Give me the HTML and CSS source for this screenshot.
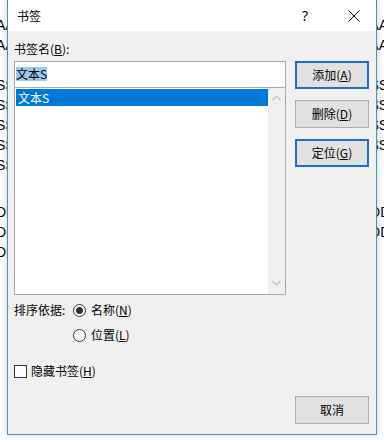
FILE: index.html
```html
<!DOCTYPE html>
<html lang="zh-CN">
<head>
<meta charset="utf-8">
<title>书签</title>
<link rel="stylesheet" href="styles.css">
</head>
<body>
<div class="doc">
  <div class="line">AAAAAAAAAAAAAAAAAAAAAAAAAAAAAAAAAAAAAAAAAAAAAAAA</div>
  <div class="line">AAAAAAAAAAAAAAAAAAAAAAAAAAAAAAAAAAAAAAAAAAAAAAAA</div>
  <div class="line"></div>
  <div class="line">SSSSSSSSSSSSSSSSSSSSSSSSSSSSSSSSSSSSSSSSSSSSSSSSSS</div>
  <div class="line">SSSSSSSSSSSSSSSSSSSSSSSSSSSSSSSSSSSSSSSSSSSSSSSSSS</div>
  <div class="line">SSSSSSSSSSSSSSSSSSSSSSSSSSSSSSSSSSSSSSSSSSSSSSSSSS</div>
  <div class="line">SSSSSSSSSSSSSSSSSSSSSSSSSSSSSSSSSSSSSSSSSSSSSSSSSS</div>
  <div class="line">SSSSSSSSSSSSSSSSSSSS</div>
  <div class="line gap">DDDDDDDDDDDDDDDDDDDDDDDDDDDDDDDDDDDDDDDDDDDDDDDD</div>
  <div class="line">DDDDDDDDDDDDDDDDDDDDDDDDDDDDDDDDDDDDDDDDDDDDDDDD</div>
  <div class="line">DDDDDDDDDDDDDDDDDDDD</div>
</div>

<div class="dialog">
  <div class="titlebar">
    <span class="title">书签</span>
    <span class="help">?</span>
    <svg class="close" width="12" height="12" viewBox="0 0 12 12"><path d="M0.5 0.5 L11.5 11.5 M11.5 0.5 L0.5 11.5" stroke="#000" stroke-width="1" fill="none"/></svg>
  </div>
  <div class="content">
    <div class="label">书签名(<u>B</u>):</div>
    <div class="main">
      <div class="leftcol">
        <div class="textbox"><span class="sel">文本S</span></div>
        <div class="listbox">
          <div class="items">
            <div class="item selected">文本S</div>
          </div>
          <div class="scrollbar">
            <svg width="9" height="6" viewBox="0 0 9 6"><path d="M0.5 5 L4.5 1 L8.5 5" stroke="#c0c0c0" stroke-width="1.2" fill="none"/></svg>
            <svg width="9" height="6" viewBox="0 0 9 6"><path d="M0.5 1 L4.5 5 L8.5 1" stroke="#c0c0c0" stroke-width="1.2" fill="none"/></svg>
          </div>
        </div>
      </div>
      <div class="buttons">
        <div class="btn default">添加(<u>A</u>)</div>
        <div class="btn">删除(<u>D</u>)</div>
        <div class="btn default">定位(<u>G</u>)</div>
      </div>
    </div>
    <div class="sort">
      <div class="sortlabel">排序依据:</div>
      <div class="radios">
        <div class="radio"><span class="circle on"></span><span>名称(<u>N</u>)</span></div>
        <div class="radio"><span class="circle"></span><span>位置(<u>L</u>)</span></div>
      </div>
    </div>
    <div class="check"><span class="box"></span><span>隐藏书签(<u>H</u>)</span></div>
    <div class="footer">
      <div class="btn">取消</div>
    </div>
  </div>
</div>
</body>
</html>
```

FILE: styles.css
```css
html, body {
  margin: 0;
  padding: 0;
}
body {
  width: 384px;
  height: 443px;
  overflow: hidden;
  position: relative;
  background: #ffffff;
  font-family: "Noto Sans CJK SC", "Noto Sans", sans-serif;
  font-size: 12px;
  color: #000;
}
u {
  text-decoration: underline;
  text-underline-offset: 1px;
}

/* background document */
.doc {
  padding-top: 15px;
  font-family: "Liberation Sans", sans-serif;
  font-size: 14px;
  color: #000;
}
.line {
  height: 20px;
  line-height: 20px;
  white-space: nowrap;
  overflow: hidden;
  text-indent: -4px;
}
.line.gap {
  margin-top: 27px;
}

/* dialog */
.dialog {
  position: absolute;
  left: 7px;
  top: -1px;
  width: 370px;
  height: 436px;
  box-sizing: border-box;
  border: 1px solid #4a93ad;
  background: #f0f0f0;
  box-shadow: 0 0 5px rgba(60, 120, 140, 0.35);
  display: flex;
  flex-direction: column;
}
.titlebar {
  height: 31px;
  background: #ffffff;
  display: flex;
  align-items: center;
  padding-left: 9px;
  flex-shrink: 0;
}
.title {
  flex: 1;
  line-height: 16px;
}
.help {
  font-family: "Noto Sans", sans-serif;
  font-size: 14px;
  width: 12px;
  margin-right: 34px;
}
.close {
  margin-right: 16px;
}

.content {
  flex: 1;
  padding: 10px 7px 0 6px;
  display: flex;
  flex-direction: column;
}
.label {
  height: 16px;
  line-height: 16px;
  margin-bottom: 4px;
}
.main {
  display: flex;
  gap: 9px;
}
.leftcol {
  width: 272px;
  display: flex;
  flex-direction: column;
}
.textbox {
  height: 27px;
  box-sizing: border-box;
  border: 1px solid #a9a9a9;
  background: #fff;
  padding: 5px 0 0 1px;
  line-height: 14px;
}
.sel {
  background: #99c9ef;
  display: inline-block;
  height: 14px;
  line-height: 14px;
}
.listbox {
  height: 207px;
  box-sizing: border-box;
  border: 1px solid #a9a9a9;
  border-top: none;
  background: #fff;
  display: flex;
}
.items {
  flex: 1;
  padding: 1px 0 0 1px;
}
.item {
  height: 17px;
  line-height: 17px;
  padding-left: 2px;
}
.item.selected {
  background: #0078d7;
  color: #fff;
}
.scrollbar {
  width: 17px;
  background: #f0f0f0;
  display: flex;
  flex-direction: column;
  justify-content: space-between;
  align-items: center;
  padding: 7px 0 8px;
}
.buttons {
  width: 74px;
  display: flex;
  flex-direction: column;
  gap: 11px;
}
.btn {
  height: 28px;
  box-sizing: border-box;
  border: 1px solid #adadad;
  background: #e1e1e1;
  display: flex;
  align-items: center;
  justify-content: center;
  line-height: 14px;
}
.btn.default {
  border: 2px solid #1d6fbf;
}

.sort {
  display: flex;
  margin-top: 7px;
}
.sortlabel {
  width: 59px;
  height: 16px;
  line-height: 16px;
}
.radios {
  display: flex;
  flex-direction: column;
  gap: 9px;
}
.radio {
  display: flex;
  align-items: center;
  gap: 5px;
  height: 16px;
  line-height: 16px;
}
.circle {
  width: 13px;
  height: 13px;
  box-sizing: border-box;
  border: 1px solid #333;
  border-radius: 50%;
  background: #fff;
  display: flex;
  align-items: center;
  justify-content: center;
}
.circle.on::after {
  content: "";
  width: 7px;
  height: 7px;
  border-radius: 50%;
  background: #333;
}
.check {
  display: flex;
  align-items: center;
  gap: 4px;
  margin-top: 20px;
  height: 16px;
  line-height: 16px;
}
.box {
  width: 13px;
  height: 13px;
  box-sizing: border-box;
  border: 1px solid #333;
  background: #fff;
}
.footer {
  display: flex;
  justify-content: flex-end;
  margin-top: 17px;
}
.footer .btn {
  width: 74px;
}
```
